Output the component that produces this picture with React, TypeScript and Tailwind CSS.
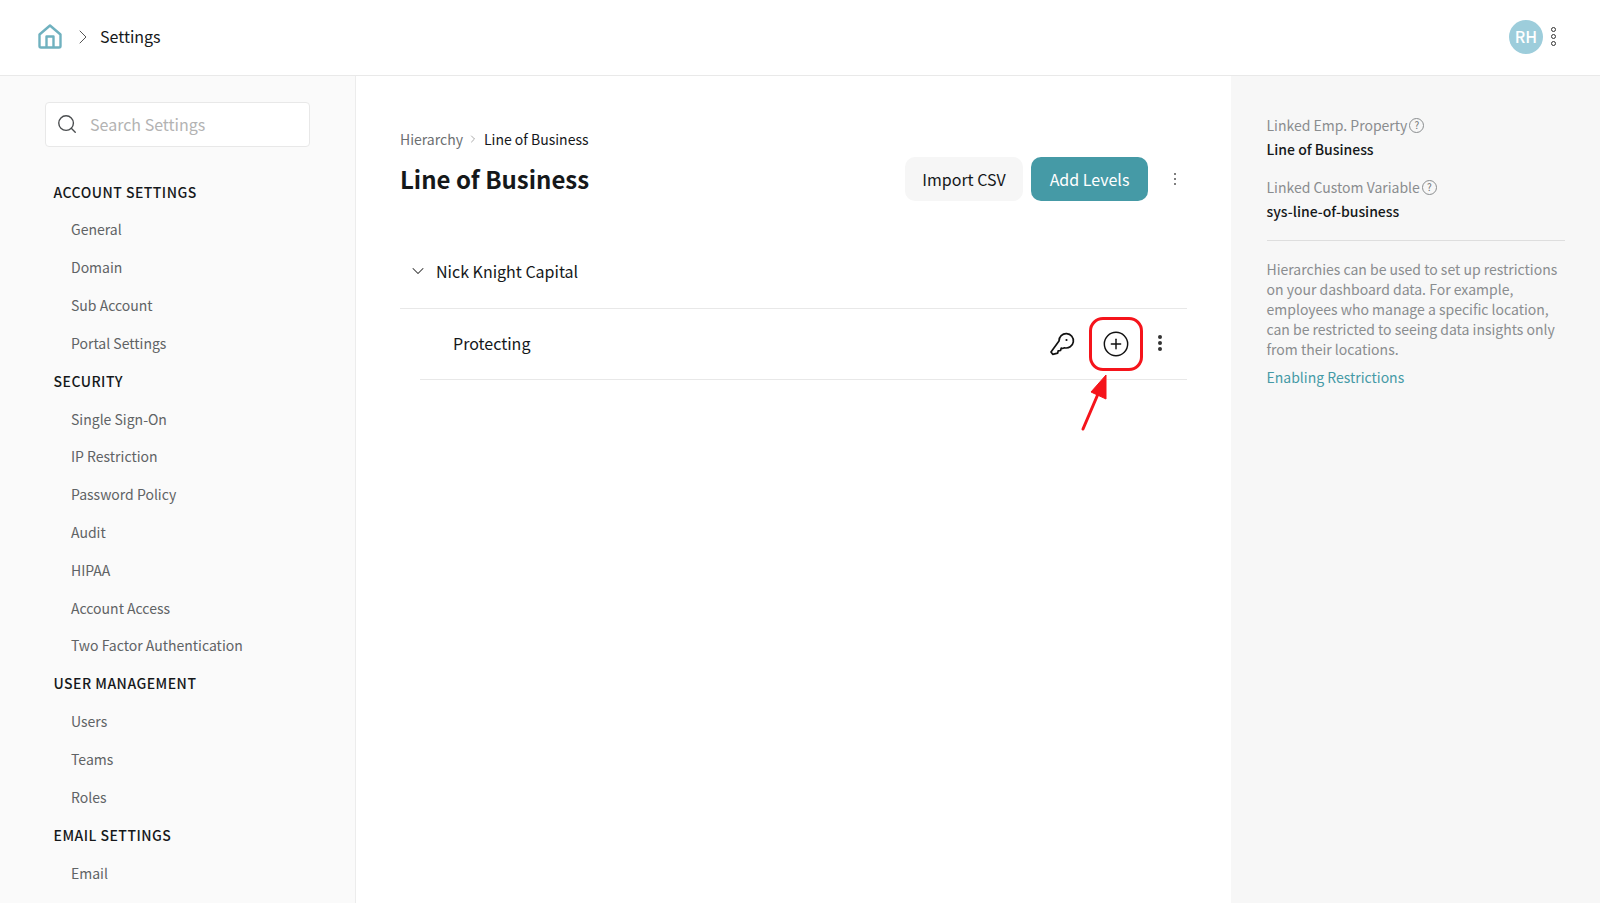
import { Search, ChevronRight, ChevronDown, CirclePlus } from 'lucide-react';

const FONT = "font-['Noto_Sans_CJK_SC','Noto_Sans',sans-serif]";

const NAV = [
  { title: 'ACCOUNT SETTINGS', items: ['General', 'Domain', 'Sub Account', 'Portal Settings'] },
  {
    title: 'SECURITY',
    items: ['Single Sign-On', 'IP Restriction', 'Password Policy', 'Audit', 'HIPAA', 'Account Access', 'Two Factor Authentication'],
  },
  { title: 'USER MANAGEMENT', items: ['Users', 'Teams', 'Roles'] },
  { title: 'EMAIL SETTINGS', items: ['Email'] },
];

function HomeIcon() {
  return (
    <svg width="24" height="25" viewBox="0 0 24 25" fill="none" stroke="#6fb1bf" strokeWidth="2.400" strokeLinejoin="round">
      <path d="M1.500 10.500 12 1.500l10.500 9v11.500a1.500 1.500 0 0 1-1.500 1.500H3a1.500 1.500 0 0 1-1.500-1.500z" />
      <path d="M8.500 23.500V12.500h7v11" />
    </svg>
  );
}

function KeyIcon() {
  return (
    <svg width="26" height="24" viewBox="0 0 26 24" fill="none" stroke="#111" strokeWidth="1.700" strokeLinejoin="round">
      <path d="M10 9a7.200 7.200 0 1 1 5.500 6.800l-2 .700-1.300-.300-.700 2.300-2.300.300-.500 2.300-5 1.200-1.700-2.300z" />
      <circle cx="17.500" cy="8" r="1.100" fill="#111" stroke="none" />
    </svg>
  );
}

function Help() {
  return (
    <span className="ml-[2px] inline-flex h-[15px] w-[15px] items-center justify-center rounded-full border border-[#8a8d8f] text-[10px] leading-none text-[#6f7274]">
      ?
    </span>
  );
}

export default function App() {
  return (
    <div className={`flex h-[903px] w-[1600px] flex-col overflow-hidden bg-white text-[#15181a] ${FONT}`}>
      <header className="flex h-[76px] shrink-0 items-center justify-between border-b border-[#e9e9e9] pb-[2px] pl-[38px] pr-[44px]">
        <div className="flex items-center">
          <HomeIcon />
          <ChevronRight size={24} strokeWidth={1} className="ml-[9px] text-[#555]" />
          <span className="mb-[1px] ml-[5px] text-[16px]">Settings</span>
        </div>
        <div className="flex items-center gap-[8px]">
          <div className="flex h-[34px] w-[34px] items-center justify-center rounded-full bg-[#9dcddb] pb-[1px] text-[16px] font-medium text-white">
            RH
          </div>
          <div className="flex flex-col gap-[2px]">
            <span className="h-[5px] w-[5px] rounded-full border border-[#333]" />
            <span className="h-[5px] w-[5px] rounded-full border border-[#333]" />
            <span className="h-[5px] w-[5px] rounded-full border border-[#333]" />
          </div>
        </div>
      </header>

      <div className="flex min-h-0 flex-1">
        <aside className="w-[356px] shrink-0 overflow-hidden border-r border-[#ececec] bg-[#fafafa] pl-[45px] pt-[26px]">
          <div className="flex h-[45px] w-[265px] items-center rounded-[4px] border border-[#e8e8e8] bg-white pb-[1px] pl-[10px]">
            <Search size={22} strokeWidth={1.500} className="text-[#4a4d4f]" />
            <span className="ml-[12px] text-[16px] text-[#b3b3b3]">Search Settings</span>
          </div>
          <nav className="mt-[26px]">
            {NAV.map((section) => (
              <div key={section.title}>
                <div className="flex h-[38px] items-center pl-[8.500px] text-[14px] font-medium tracking-[0.035em] text-[#15181a]">
                  {section.title}
                </div>
                {section.items.map((item) => (
                  <div key={item} className="flex h-[37.800px] items-center pl-[26px] text-[14px] text-[#5f6365]">
                    {item}
                  </div>
                ))}
              </div>
            ))}
          </nav>
        </aside>

        <main className="min-w-0 flex-1 pl-[44px] pr-[44px] pt-[52px]">
          <div className="flex items-center text-[14px] leading-[22px]">
            <span className="text-[#6c6f71]">Hierarchy</span>
            <ChevronRight size={12} strokeWidth={1.250} className="mx-[4.500px] text-[#777]" />
            <span>Line of Business</span>
          </div>
          <div className="mt-[7px] flex items-start justify-between">
            <h1 className="text-[24px] font-bold leading-[44px]">Line of Business</h1>
            <div className="flex items-center">
              <button className="h-[44px] w-[118px] -translate-x-[1px] rounded-[10px] bg-[#f6f6f6] pb-[1px] text-[16px]">Import CSV</button>
              <button className="ml-[7px] h-[44px] w-[117px] rounded-[10px] bg-[#459aa6] pb-[1px] text-[16px] text-white">Add Levels</button>
              <div className="ml-[26px] mr-[11px] flex flex-col gap-[3px]">
                <span className="h-[2px] w-[2px] rounded-full bg-[#555]" />
                <span className="h-[2px] w-[2px] rounded-full bg-[#555]" />
                <span className="h-[2px] w-[2px] rounded-full bg-[#555]" />
              </div>
            </div>
          </div>

          <div className="mt-[35px] flex h-[73px] items-center border-b border-[#e8e8e8] pb-[2px] pl-[8px] text-[16px]">
            <ChevronDown size={20} strokeWidth={1.250} className="text-[#333]" />
            <span className="ml-[8px]">Nick Knight Capital</span>
          </div>
          <div className="ml-[20px] flex h-[71px] items-center justify-between border-b border-[#e8e8e8] pl-[33px] text-[16px]">
            <span className="pb-[3px]">Protecting</span>
            <div className="relative flex items-center pr-[25px]">
              <KeyIcon />
              <div className="ml-[14px] flex h-[54px] w-[54px] items-center justify-center rounded-[14px] border-[3px] border-[#f5141b]">
                <CirclePlus size={28} strokeWidth={1.250} className="text-[#111]" />
              </div>
              <div className="mb-[2px] ml-[15px] flex flex-col gap-[2px]">
                <span className="h-[4px] w-[4px] rounded-full bg-[#333]" />
                <span className="h-[4px] w-[4px] rounded-full bg-[#333]" />
                <span className="h-[4px] w-[4px] rounded-full bg-[#333]" />
              </div>
              <svg className="absolute left-[30px] top-[55px]" width="36" height="66" viewBox="0 0 36 66" fill="none">
                <path d="M4 57 19 22" stroke="#f5141b" strokeWidth="3" strokeLinecap="round" />
                <path d="M27 3 12 20l15 7z" fill="#f5141b" stroke="#f5141b" strokeLinejoin="round" />
              </svg>
            </div>
          </div>
        </main>

        <aside className="w-[369px] shrink-0 bg-[#f7f7f7] pl-[35.500px] pr-[35px] pt-[37px]">
          <div className="flex h-[24px] items-center text-[14px] text-[#8a8d8f]">
            Linked Emp. Property
            <Help />
          </div>
          <div className="text-[14px] font-medium leading-[24px]">Line of Business</div>
          <div className="mt-[14px] flex h-[24px] items-center text-[14px] text-[#8a8d8f]">
            Linked Custom Variable
            <Help />
          </div>
          <div className="text-[14px] font-medium leading-[24px]">sys-line-of-business</div>
          <div className="mt-[17px] border-t border-[#dedede]" />
          <p className="mt-[18px] text-[14px] leading-[20px] text-[#8a8d8f]">
            Hierarchies can be used to set up restrictions on your dashboard data. For example, employees who manage a specific location, can be restricted to seeing data insights only from their locations.
          </p>
          <div className="mt-[6px] text-[14px] leading-[24px] text-[#459aa6]">Enabling Restrictions</div>
        </aside>
      </div>
    </div>
  );
}
